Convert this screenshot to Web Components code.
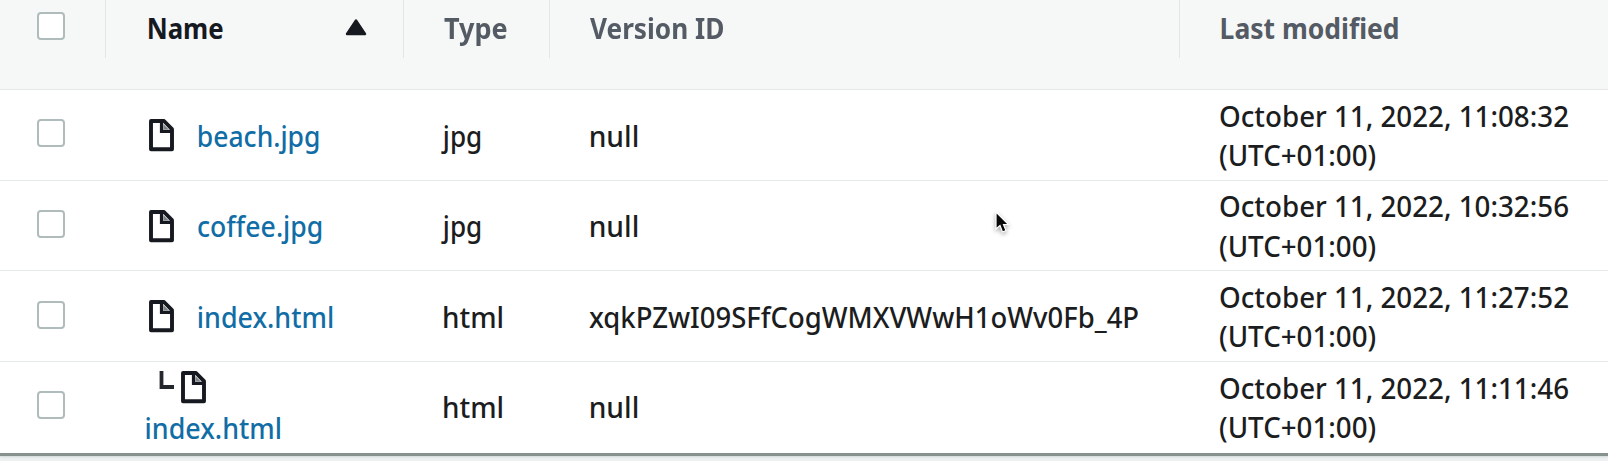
<!DOCTYPE html>
<html lang="en"><head><meta charset="utf-8"><title>Object versions</title>
<style>
html,body{margin:0;height:100%;overflow:hidden;background:#eef1f1}
body{font-family:"Noto Sans","Open Sans",sans-serif;font-size:28px;line-height:39.5px;color:#1b1d20}
</style></head><body>
<object-table></object-table>
<script>
class FitText extends HTMLElement{
  connectedCallback(){
    const r=this.attachShadow({mode:'open'});
    r.innerHTML='<style>:host{display:block;white-space:nowrap;width:max-content}span{display:inline-block;transform-origin:0 50%}</style><span><slot></slot></span>';
    const s=getComputedStyle(this),c=document.createElement('canvas').getContext('2d');
    c.font=`${s.fontWeight} ${s.fontSize} ${s.fontFamily}`;
    const m=c.measureText(this.textContent),k=this.getAttribute('ink')/(m.actualBoundingBoxRight+m.actualBoundingBoxLeft);
    const x=m.actualBoundingBoxLeft*k+Number(this.getAttribute('nudge')||0);
    r.querySelector('span').style.transform=`translateX(${x}px) scaleX(${k})`;
  }
}
class CheckBox extends HTMLElement{
  connectedCallback(){this.attachShadow({mode:'open'}).innerHTML='<style>:host{display:block;box-sizing:border-box;width:28px;height:28px;border:2px solid #b0bcbc;border-radius:4px;background:#fff}</style>';}
}
class FileIcon extends HTMLElement{
  connectedCallback(){this.attachShadow({mode:'open'}).innerHTML='<style>:host{display:block;width:25px;height:33px}svg{display:block}</style><svg width="25" height="33" viewBox="0 0 25 33" fill="none" stroke="#16191f" stroke-linejoin="round"><path d="M2 2H15L23 10.2V30.3H2Z" stroke-width="3.9"/><path d="M12.5 3V12.3H22" stroke-width="3.2" stroke-linejoin="miter"/><path d="M14.3 5V10.5H19.8Z" fill="#7d8284" stroke="none"/></svg>';}
}
class HeadCell extends HTMLElement{
  connectedCallback(){this.attachShadow({mode:'open'}).innerHTML='<style>:host{display:flex;box-sizing:border-box;height:58px;padding:9px 0 0 var(--pad,40px);border-right:1px solid #e2e6e6;font-weight:700;color:#545b64}:host([sorted]){color:#16191f;justify-content:space-between;padding-right:36px}:host([last]){border:0}svg{display:block;margin-top:10px}</style><slot></slot>'+(this.hasAttribute('sorted')?'<svg width="22" height="17" viewBox="0 0 22 17"><path d="M11 1.5L20 15H2Z" fill="#16191f" stroke="#16191f" stroke-width="2.4" stroke-linejoin="round"/></svg>':'');}
}
class ObjectRow extends HTMLElement{
  connectedCallback(){
    const a=n=>this.getAttribute(n),child=this.hasAttribute('nested');
    const link=`<fit-text class="link" ink="${a('name-ink')}" nudge="${a('name-nudge')||0}">${a('name')}</fit-text>`;
    const name=child?`<div class="tree"><svg width="16" height="19" viewBox="0 0 16 19"><path d="M2.5 0V16H15" fill="none" stroke="#24282d" stroke-width="3.8"/></svg><file-icon></file-icon></div>${link}`:`<file-icon></file-icon>${link}`;
    this.attachShadow({mode:'open'}).innerHTML=`<style>
    :host{display:grid;grid-template-columns:106px 298px 147px 629px 1fr;height:90.65px;box-sizing:border-box;border-bottom:1px solid #e5e9e9}
    check-box{margin:29.3px 0 0 37px}
    .name{display:flex;padding:29px 0 0 43px;gap:24.5px}
    .nested{flex-direction:column;gap:0;padding:9px 0 0 40px}
    .name:not(.nested) .link{margin-top:-2.5px}
    .tree{display:flex;gap:6px;padding-left:13px}
    .tree+.link{margin-top:5px}
    .link{color:#116da5;font-weight:500}
    .cell{padding:26.5px 0 0 39px;font-weight:500}
    .date{padding:6.6px 0 0 40px;font-weight:500}
    </style><check-box></check-box><div class="name ${child?'nested':''}">${name}</div>
    <div class="cell"><fit-text ink="${a('type-ink')}" nudge="${a('type-nudge')}">${a('type')}</fit-text></div>
    <div class="cell"><fit-text ink="${a('version-ink')||47}" nudge="${a('version')?-1:.7}">${a('version')||'null'}</fit-text></div>
    <div class="date"><fit-text ink="348">October 11, 2022, ${a('time')}</fit-text><fit-text ink="155.5">(UTC+01:00)</fit-text></div>`;
  }
}
class MousePointer extends HTMLElement{
  connectedCallback(){this.attachShadow({mode:'open'}).innerHTML='<style>:host{position:absolute;left:994px;top:210px;filter:drop-shadow(0 2px 2px #0005)}svg{display:block}</style><svg width="18" height="26" viewBox="0 0 18 26"><path d="M2 2V19L6 15.5L8.5 22L12 20.5L9.5 14.5H14.5Z" fill="#080808" stroke="#fff" stroke-width="1.2"/></svg>';}
}
class ObjectTable extends HTMLElement{
  connectedCallback(){this.attachShadow({mode:'open'}).innerHTML=`<style>
  :host{display:block;height:456px;box-sizing:border-box;background:#fff;border-bottom:3px solid #87928f;box-shadow:0 1px 2px #8795964d}
  .head{display:grid;grid-template-columns:106px 298px 146px 630px 1fr;height:90px;box-sizing:border-box;background:#f6f8f7;border-bottom:1px solid #e5e8e8}
  .select{--pad:37px}.select check-box{margin-top:3px}
  object-row:last-of-type{border-bottom:0}
  </style><div class="head"><head-cell class="select"><check-box></check-box></head-cell>
  <head-cell sorted style="--pad:42px"><fit-text ink="74.5" nudge=".5">Name</fit-text></head-cell>
  <head-cell><fit-text ink="63">Type</fit-text></head-cell>
  <head-cell><fit-text ink="133">Version ID</fit-text></head-cell>
  <head-cell last style="--pad:41px"><fit-text ink="176.5" nudge=".5">Last modified</fit-text></head-cell></div>
  <object-row name="beach.jpg" name-ink="120.5" name-nudge="-.3" type="jpg" type-ink="40" type-nudge="-2" time="11:08:32"></object-row>
  <object-row name="coffee.jpg" name-ink="124" name-nudge="-1" type="jpg" type-ink="40" type-nudge="-2" time="10:32:56"></object-row>
  <object-row name="index.html" name-ink="134" name-nudge="-.3" type="html" type-ink="58.5" type-nudge="1" version="xqkPZwI09SFfCogWMXVWwH1oWv0Fb_4P" version-ink="549" time="11:27:52"></object-row>
  <object-row nested name="index.html" name-ink="134" name-nudge=".5" type="html" type-ink="58.5" type-nudge="1" time="11:11:46"></object-row>
  <mouse-pointer></mouse-pointer>`;}
}
customElements.define('fit-text',FitText);
customElements.define('check-box',CheckBox);
customElements.define('file-icon',FileIcon);
customElements.define('head-cell',HeadCell);
customElements.define('object-row',ObjectRow);
customElements.define('mouse-pointer',MousePointer);
customElements.define('object-table',ObjectTable);
</script></body></html>
